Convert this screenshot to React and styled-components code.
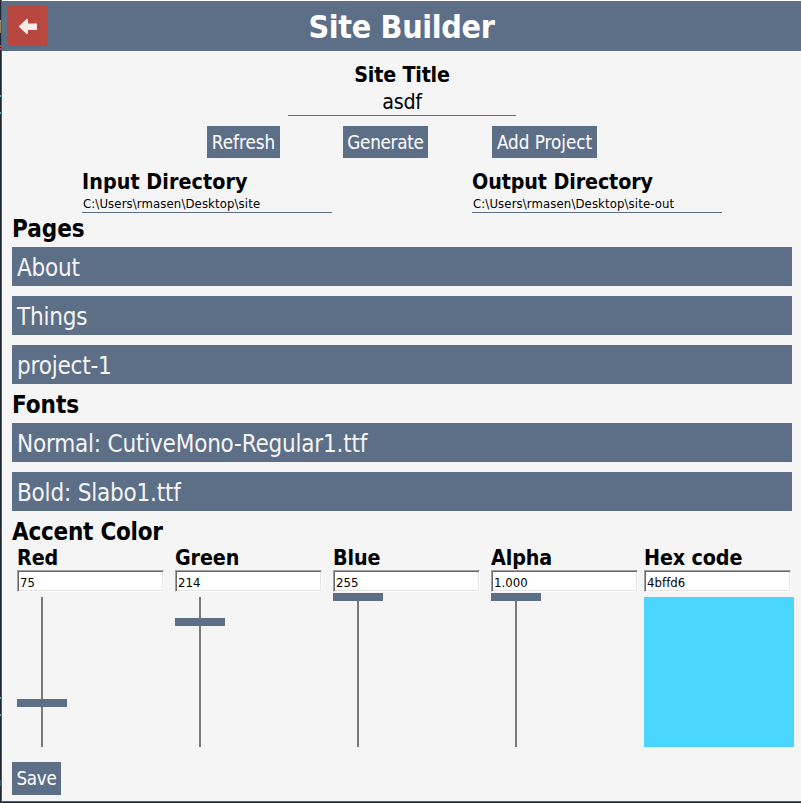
import React from "react";
import styled, { createGlobalStyle } from "styled-components";

const slate = "#5d6e87";

const Global = createGlobalStyle`
  * { box-sizing: border-box; }
  html, body { margin: 0; background: #f5f5f5; overflow: hidden; }
  h1, h2, h3 { margin: 0; font-weight: 700; white-space: nowrap; }
  body, input, button { font-family: "DejaVu Sans Condensed", "DejaVu Sans", Tahoma, sans-serif; font-stretch: condensed; }
`;

const Shell = styled.div`
  display: grid;
  grid-template-columns: 1px 1px 1fr;
  width: 801px;
  height: 803px;
  color: #000;
  background: #f5f5f5;
`;
/* Sliver of the desktop visible beside the window */
const Desktop = styled.div`
  background:
    linear-gradient(#9a9f9f, #9a9f9f) 0 20px / 1px 2px no-repeat,
    linear-gradient(#8d8250, #8d8250) 0 22px / 1px 11px no-repeat,
    linear-gradient(#c04a4e, #c04a4e) 0 45px / 1px 2px no-repeat,
    linear-gradient(#c04a4e, #c04a4e) 0 48px / 1px 2px no-repeat,
    linear-gradient(#4aa3c7, #4aa3c7) 0 95px / 1px 2px no-repeat,
    linear-gradient(#4aa3c7, #4aa3c7) 0 112px / 1px 2px no-repeat,
    linear-gradient(#4aa3c7, #4aa3c7) 0 697px / 1px 2px no-repeat,
    linear-gradient(#4aa3c7, #4aa3c7) 0 714px / 1px 2px no-repeat,
    linear-gradient(#2c4f7c, #2c4f7c) 0 780px / 1px 6px no-repeat,
    #1f2630;
`;
const Frame = styled.div`
  background: #5a5c5c;
`;
const Window = styled.main`
  display: flex;
  flex-direction: column;
  border-top: 1px solid #fff;
  border-bottom: 1px solid #1f2a36;
  box-shadow: inset 0 -1px #5a5c5c;
  min-width: 0;
`;
const Header = styled.header`
  display: grid;
  grid-template-columns: 50px 1fr 50px;
  align-items: center;
  height: 50px;
  background: ${slate};
`;
const Back = styled.button`
  display: flex;
  width: 40px;
  height: 40px;
  margin-left: 5px;
  padding: 0;
  border: 0;
  background: #b7473f;
`;
const AppTitle = styled.h1`
  height: 50px;
  font-size: 32px;
  line-height: 52px;
  letter-spacing: -0.35px;
  text-align: center;
  color: #fff;
`;
const Body = styled.div`
  display: flex;
  flex-direction: column;
  padding: 0 7px 0 10px;
`;
const TitleField = styled.label`
  display: flex;
  flex-direction: column;
  align-items: center;
  width: 228px;
  height: 65px;
  padding-top: 10px;
  margin-left: 276px;
  border-bottom: 1px solid ${slate};
`;
const Label = styled.h3`
  font-size: 21.3px;
  line-height: 27px;
  letter-spacing: ${(p) => p.$track || 0}px;
`;
const TitleInput = styled.input`
  width: 100%;
  height: 27px;
  padding: 0;
  border: 0;
  background: none;
  text-align: center;
  font-size: 21.3px;
  letter-spacing: -0.3px;
  outline: 0;
`;
const Actions = styled.div`
  display: grid;
  grid-template-columns: 73px 85px 105px;
  column-gap: 63px;
  margin: 10px 0 0 195px;

  & > :last-child { margin: 0 -1px 0 1px; }
`;
const Button = styled.button`
  width: ${(p) => p.$w}px;
  height: ${(p) => p.$h || 32}px;
  padding: 0;
  border: 0;
  background: ${slate};
  color: #fff;
  font-size: 18.67px;
  letter-spacing: ${(p) => p.$track || 0}px;
  white-space: nowrap;
`;
const Directories = styled.div`
  display: flex;
  gap: 140px;
  margin: 10px 0 0 70px;
`;
const Directory = styled.label`
  display: flex;
  flex-direction: column;
  width: 250px;
  height: 45px;
  border-bottom: 1px solid ${slate};
`;
const PathInput = styled.input`
  width: 100%;
  height: 17px;
  padding: 0 1px;
  border: 0;
  background: none;
  font-size: 13px;
  letter-spacing: 0.12px;
  outline: 0;
`;
const SectionTitle = styled.h2`
  font-size: 24px;
  line-height: 31px;
  height: ${(p) => p.$h || 29}px;
  margin-top: ${(p) => p.$top || 0}px;
  letter-spacing: ${(p) => p.$track || 0}px;
`;
const List = styled.div`
  display: flex;
  flex-direction: column;
  gap: 10px;
  margin-top: 4px;
  width: 780px;
`;
const Row = styled.div`
  height: 39px;
  padding-left: 5px;
  background: ${slate};
  color: #f5f5f5;
  font-size: 24px;
  line-height: 43px;
  letter-spacing: -0.2px;
`;
const Channels = styled.div`
  display: flex;
  gap: 12px;
  padding-left: 5px;
`;
const Channel = styled.div`
  display: flex;
  flex-direction: column;
  width: ${(p) => p.$w || 146}px;
`;
const HexChannel = styled(Channel)`
  margin-left: -5px;
`;
const ValueInput = styled.input`
  width: 147px;
  height: 22px;
  margin-top: -1px;
  padding: 3px 2px 0;
  border: 1px solid;
  border-color: #a0a0a0 #fff #fff #a0a0a0;
  box-shadow: inset 1px 1px #696969, inset -1px -1px #e3e3e3;
  background: #fff;
  font-size: 13px;
  letter-spacing: 0.05px;
  outline: 0;
`;
const Slider = styled.div`
  display: grid;
  justify-items: center;
  width: 50px;
  height: 150px;
  margin-top: 5px;
  background: linear-gradient(#7a7a7a, #7a7a7a) 24px 0 / 2px 150px no-repeat;
`;
const Thumb = styled.div`
  width: 50px;
  height: 8px;
  background: ${slate};
`;
const Swatch = styled.div`
  width: 150px;
  height: 150px;
  margin-top: 5px;
  background: #4bd6ff;
`;
const Footer = styled.footer`
  display: flex;
  margin-top: 15px;
`;

const pages = ["About", "Things", "project-1"];
const fonts = ["Normal: CutiveMono-Regular1.ttf", "Bold: Slabo1.ttf"];
const channels = [
  { name: "Red", value: "75", pos: 75 / 255 },
  { name: "Green", value: "214", pos: 214 / 255 },
  { name: "Blue", value: "255", pos: 1 },
  { name: "Alpha", value: "1.000", pos: 1 },
];

export default function App() {
  return (
    <Shell>
      <Global />
      <Desktop />
      <Frame />
      <Window>
        <Header>
          <Back aria-label="Back">
            <svg width="40" height="40" viewBox="0 0 40 40">
              <path d="M11.7 20.500 19.500 13H21v4.500h9v6.500h-9v4h-1.500z" fill="#f9e9e8" />
            </svg>
          </Back>
          <AppTitle>Site Builder</AppTitle>
        </Header>
        <Body>
          <TitleField>
            <Label $track={-0.2}>Site Title</Label>
            <TitleInput defaultValue="asdf" />
          </TitleField>
          <Actions>
            <Button $w={73}>Refresh</Button>
            <Button $w={85} $track={-0.25}>Generate</Button>
            <Button $w={105}>Add Project</Button>
          </Actions>
          <Directories>
            <Directory>
              <Label $track={0.07}>Input Directory</Label>
              <PathInput defaultValue={"C:\\Users\\rmasen\\Desktop\\site"} />
            </Directory>
            <Directory>
              <Label $track={-0.12}>Output Directory</Label>
              <PathInput defaultValue={"C:\\Users\\rmasen\\Desktop\\site-out"} />
            </Directory>
          </Directories>
          <SectionTitle $top={1}>Pages</SectionTitle>
          <List>
            {pages.map((t) => <Row key={t}>{t}</Row>)}
          </List>
          <SectionTitle $top={6}>Fonts</SectionTitle>
          <List>
            {fonts.map((t) => <Row key={t}>{t}</Row>)}
          </List>
          <SectionTitle $top={6} $h={27} $track={-0.25}>Accent Color</SectionTitle>
          <Channels>
            {channels.map((c) => (
              <Channel key={c.name}>
                <Label $track={-0.12}>{c.name}</Label>
                <ValueInput defaultValue={c.value} />
                <Slider>
                  <Thumb style={{ transform: `translateY(${Math.ceil((1 - c.pos) * 150 - 4)}px)` }} />
                </Slider>
              </Channel>
            ))}
            <HexChannel $w={150}>
              <Label $track={-0.12}>Hex code</Label>
              <ValueInput defaultValue="4bffd6" />
              <Swatch />
            </HexChannel>
          </Channels>
          <Footer>
            <Button $w={49} $h={33} $track={-0.3}>Save</Button>
          </Footer>
        </Body>
      </Window>
    </Shell>
  );
}
